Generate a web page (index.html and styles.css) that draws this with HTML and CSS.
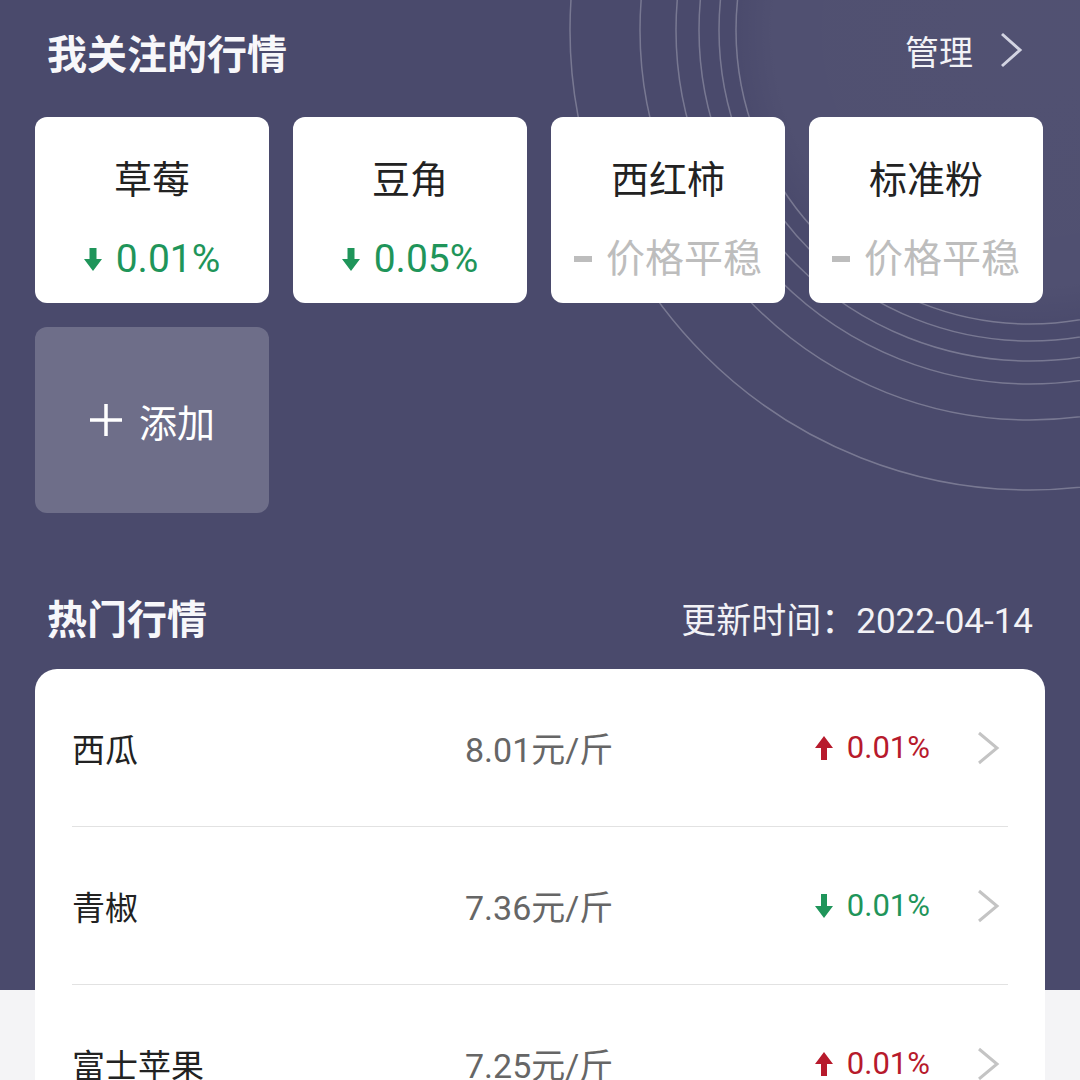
FILE: index.html
```html
<!DOCTYPE html>
<html lang="zh-CN">
<head>
    <meta charset="UTF-8">
    <meta name="viewport" content="width=device-width, initial-scale=1.0">
    <title>行情</title>
    <link rel="stylesheet" href="styles.css">
</head>
<body>
    <div class="page">
        <svg class="rings" width="1080" height="990" viewBox="0 0 1080 990">
            <defs>
                <radialGradient id="glow" cx="1030" cy="30" r="300" gradientUnits="userSpaceOnUse">
                    <stop offset="0" stop-color="#ffffff" stop-opacity="0.04"/>
                    <stop offset="0.85" stop-color="#ffffff" stop-opacity="0.035"/>
                    <stop offset="1" stop-color="#ffffff" stop-opacity="0"/>
                </radialGradient>
            </defs>
            <circle cx="1030" cy="30" r="300" fill="url(#glow)"/>
            <g fill="none" stroke="#ffffff" stroke-opacity="0.26" stroke-width="1.5">
                <circle cx="1030" cy="30" r="294"/>
                <circle cx="1030" cy="30" r="311"/>
                <circle cx="1030" cy="30" r="331"/>
                <circle cx="1030" cy="30" r="354"/>
                <circle cx="1030" cy="30" r="390"/>
                <circle cx="1030" cy="30" r="460"/>
            </g>
        </svg>

        <div class="content">
            <div class="section-head">
                <h2>我关注的行情</h2>
                <a class="manage" href="#">管理
                    <svg width="24" height="36" viewBox="0 0 24 36"><path d="M3 2 L21 18 L3 34" fill="none" stroke="#d3d4e2" stroke-width="3"/></svg>
                </a>
            </div>

            <div class="watch-grid">
                <div class="watch-card">
                    <div class="name">草莓</div>
                    <div class="change down">
                        <svg class="arrow" width="18" height="23" viewBox="0 0 18 23"><path d="M5.5 0 H12.5 V11 H18 L9 23 L0 11 H5.5 Z" fill="currentColor"/></svg>
                        0.01%
                    </div>
                </div>
                <div class="watch-card">
                    <div class="name">豆角</div>
                    <div class="change down">
                        <svg class="arrow" width="18" height="23" viewBox="0 0 18 23"><path d="M5.5 0 H12.5 V11 H18 L9 23 L0 11 H5.5 Z" fill="currentColor"/></svg>
                        0.05%
                    </div>
                </div>
                <div class="watch-card">
                    <div class="name">西红柿</div>
                    <div class="change flat"><span class="dash"></span>价格平稳</div>
                </div>
                <div class="watch-card">
                    <div class="name">标准粉</div>
                    <div class="change flat"><span class="dash"></span>价格平稳</div>
                </div>
                <div class="add-card">
                    <svg width="34" height="34" viewBox="0 0 34 34"><path d="M17 1 V33 M1 17 H33" stroke="#ffffff" stroke-width="3.5"/></svg>
                    添加
                </div>
            </div>

            <div class="section-head hot-head">
                <h2>热门行情</h2>
                <span class="update">更新时间：2022-04-14</span>
            </div>

            <div class="hot-list">
                <div class="hot-row">
                    <span class="item">西瓜</span>
                    <span class="price">8.01元/斤</span>
                    <span class="rate up">
                        <svg class="arrow" width="18" height="24" viewBox="0 0 18 24"><path d="M6 24 H12 V12 H18 L9 0 L0 12 H6 Z" fill="currentColor"/></svg>
                        0.01%
                    </span>
                    <svg class="chev" width="24" height="34" viewBox="0 0 24 34"><path d="M3 2 L21 17 L3 32" fill="none" stroke="#c4c4c4" stroke-width="3"/></svg>
                </div>
                <div class="hot-row">
                    <span class="item">青椒</span>
                    <span class="price">7.36元/斤</span>
                    <span class="rate down">
                        <svg class="arrow" width="18" height="24" viewBox="0 0 18 24"><path d="M6 0 H12 V12 H18 L9 24 L0 12 H6 Z" fill="currentColor"/></svg>
                        0.01%
                    </span>
                    <svg class="chev" width="24" height="34" viewBox="0 0 24 34"><path d="M3 2 L21 17 L3 32" fill="none" stroke="#c4c4c4" stroke-width="3"/></svg>
                </div>
                <div class="hot-row">
                    <span class="item">富士苹果</span>
                    <span class="price">7.25元/斤</span>
                    <span class="rate up">
                        <svg class="arrow" width="18" height="24" viewBox="0 0 18 24"><path d="M6 24 H12 V12 H18 L9 0 L0 12 H6 Z" fill="currentColor"/></svg>
                        0.01%
                    </span>
                    <svg class="chev" width="24" height="34" viewBox="0 0 24 34"><path d="M3 2 L21 17 L3 32" fill="none" stroke="#c4c4c4" stroke-width="3"/></svg>
                </div>
            </div>
        </div>
    </div>
</body>
</html>
```

FILE: styles.css
```css
body {
    margin: 0;
    background-color: #f4f4f6;
    font-family: Roboto, "Noto Sans CJK SC", sans-serif;
}
.page {
    position: relative;
    width: 1080px;
    height: 1080px;
    overflow: hidden;
    background: linear-gradient(#4a4a6c 0, #4a4a6c 990px, #f4f4f6 990px); /* 深色背景 */
}
.rings {
    position: absolute;
    top: 0;
    left: 0;
}
.content {
    position: relative;
    padding: 0 35px;
}
.section-head {
    display: flex;
    justify-content: space-between;
    align-items: center;
    height: 104px;
    padding: 0 12px;
}
.section-head h2 {
    margin: 0;
    color: #f7f7fa;
    font-size: 40px;
    font-weight: 700;
    font-family: "Noto Sans CJK SC", sans-serif;
}
.manage {
    display: flex;
    align-items: center;
    gap: 26px;
    color: #f2f2f6;
    font-size: 34px;
    text-decoration: none;
    margin-right: 10px;
    margin-top: -4px;
}
.watch-grid {
    display: grid;
    grid-template-columns: repeat(4, 234px);
    gap: 24px;
    margin-top: 13px;
}
.watch-card {
    height: 186px;
    box-sizing: border-box;
    padding-top: 38px;
    background-color: #ffffff;
    border-radius: 12px;
    text-align: center;
}
.name {
    line-height: 50px;
    font-size: 38px;
    color: #222222;
}
.change {
    display: flex;
    justify-content: center;
    align-items: center;
    gap: 14px;
    margin-top: 29px;
    line-height: 50px;
    font-size: 39px;
}
.down {
    color: #1f955a; /* 下跌 */
}
.up {
    color: #b71a2c; /* 上涨 */
}
.flat {
    color: #bdbdbd;
    gap: 14px;
}
.dash {
    width: 18px;
    height: 6px;
    background-color: #bdbdbd;
}
.add-card {
    height: 186px;
    display: flex;
    justify-content: center;
    align-items: center;
    gap: 16px;
    background-color: rgba(255, 255, 255, 0.2);
    border-radius: 12px;
    color: #ffffff;
    font-size: 38px;
}
.hot-head {
    height: 52px;
    margin-top: 78px;
    margin-bottom: 26px;
}
.update {
    color: #f2f2f6;
    font-size: 35px;
}
.hot-list {
    background-color: #ffffff;
    border-radius: 22px;
    padding: 0 37px;
}
.hot-row {
    display: flex;
    align-items: center;
    height: 157px;
    border-bottom: 1px solid #e2e2e2;
}
.item {
    width: 393px;
    font-size: 33px;
    color: #222222;
}
.price {
    flex: 1;
    font-size: 34px;
    color: #666666;
}
.rate {
    display: flex;
    align-items: center;
    gap: 14px;
    font-size: 31px;
    margin-right: 46px;
}
.chev {
    margin-right: 8px;
}
```
